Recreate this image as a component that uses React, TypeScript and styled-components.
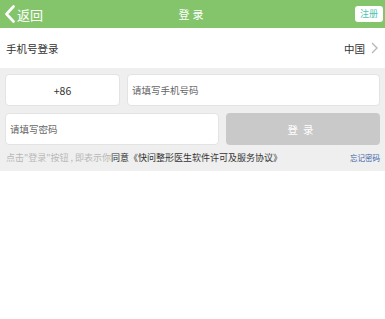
import React from "react";
import styled, { createGlobalStyle } from "styled-components";

const Global = createGlobalStyle`
  html, body { margin: 0; padding: 0; background: #ffffff; }
  body { font-family: "Noto Sans CJK SC", "Liberation Sans", sans-serif; }
  * { box-sizing: border-box; }
`;

const Header = styled.div`
  height: 28px;
  background: #84c56c;
  display: flex;
  align-items: center;
  justify-content: space-between;
  padding: 0 2px 0 4px;
  position: relative;
  color: #fff;
`;

const Back = styled.div`
  display: flex;
  align-items: center;
  gap: 1px;
  font-size: 13px;
`;

const Title = styled.div`
  position: absolute;
  left: 0;
  right: 0;
  text-align: center;
  font-size: 11px;
  letter-spacing: 3px;
  pointer-events: none;
`;

const RegisterBtn = styled.div`
  background: #fff;
  color: #4fc4b0;
  font-size: 9px;
  border-radius: 3px;
  height: 16px;
  width: 28px;
  display: flex;
  align-items: center;
  justify-content: center;
  margin-top: -1px;
`;

const Row = styled.div`
  height: 40px;
  background: #fff;
  display: flex;
  align-items: center;
  justify-content: space-between;
  padding: 0 7px 0 6px;
  font-size: 10.5px;
  color: #333;
`;

const RowRight = styled.div`
  display: flex;
  align-items: center;
  gap: 6px;
`;

const Panel = styled.div`
  background: #efefef;
  padding: 6px 5px 0 5px;
  height: 103px;
`;

const Line = styled.div<{ $cols: string }>`
  display: grid;
  grid-template-columns: ${(p) => p.$cols};
  gap: 7px;
  margin-bottom: 7px;
`;

const Field = styled.div<{ $center?: boolean }>`
  height: 32px;
  background: #fff;
  border: 1px solid #e3e3e3;
  border-radius: 4px;
  display: flex;
  align-items: center;
  justify-content: ${(p) => (p.$center ? "center" : "flex-start")};
  padding: 0 4px;
  font-size: ${(p) => (p.$center ? "10.5px" : "9.5px")};
  color: ${(p) => (p.$center ? "#333" : "#666")};
`;

const LoginBtn = styled.div`
  height: 32px;
  background: #c9c9c9;
  border-radius: 4px;
  display: flex;
  align-items: center;
  justify-content: center;
  color: #fff;
  font-size: 10.5px;
  letter-spacing: 5px;
`;

const Footer = styled.div`
  display: flex;
  justify-content: space-between;
  align-items: center;
  padding: 0 0 0 1px;
  margin-top: -1px;
  font-size: 9px;
  white-space: pre;
`;

const Light = styled.span`
  color: #b8b8b8;
`;

const Dark = styled.span`
  color: #333;
`;

const Forgot = styled.span`
  color: #3d5fa6;
  font-size: 7.5px;
`;

export default function App() {
  return (
    <>
      <Global />
      <Header>
        <Back>
          <svg width="12" height="18" viewBox="0 0 12 18">
            <path d="M9.5 1.5 L2.5 9 L9.5 16.5" fill="none" stroke="#fff" strokeWidth="2.6" strokeLinecap="round" strokeLinejoin="round" />
          </svg>
          <span>返回</span>
        </Back>
        <Title>登录</Title>
        <RegisterBtn>注册</RegisterBtn>
      </Header>
      <Row>
        <span>手机号登录</span>
        <RowRight>
          <span>中国</span>
          <svg width="7" height="12" viewBox="0 0 7 12">
            <path d="M1 1 L6 6 L1 11" fill="none" stroke="#b8b8b8" strokeWidth="1.4" />
          </svg>
        </RowRight>
      </Row>
      <Panel>
        <Line $cols="115px 1fr">
          <Field $center>+86</Field>
          <Field>请填写手机号码</Field>
        </Line>
        <Line $cols="214px 1fr">
          <Field>请填写密码</Field>
          <LoginBtn>登录</LoginBtn>
        </Line>
        <Footer>
          <span>
            <Light>点击"登录"按钮 , 即表示你</Light>
            <Dark>同意《快问整形医生软件许可及服务协议》</Dark>
          </span>
          <Forgot>忘记密码</Forgot>
        </Footer>
      </Panel>
    </>
  );
}
